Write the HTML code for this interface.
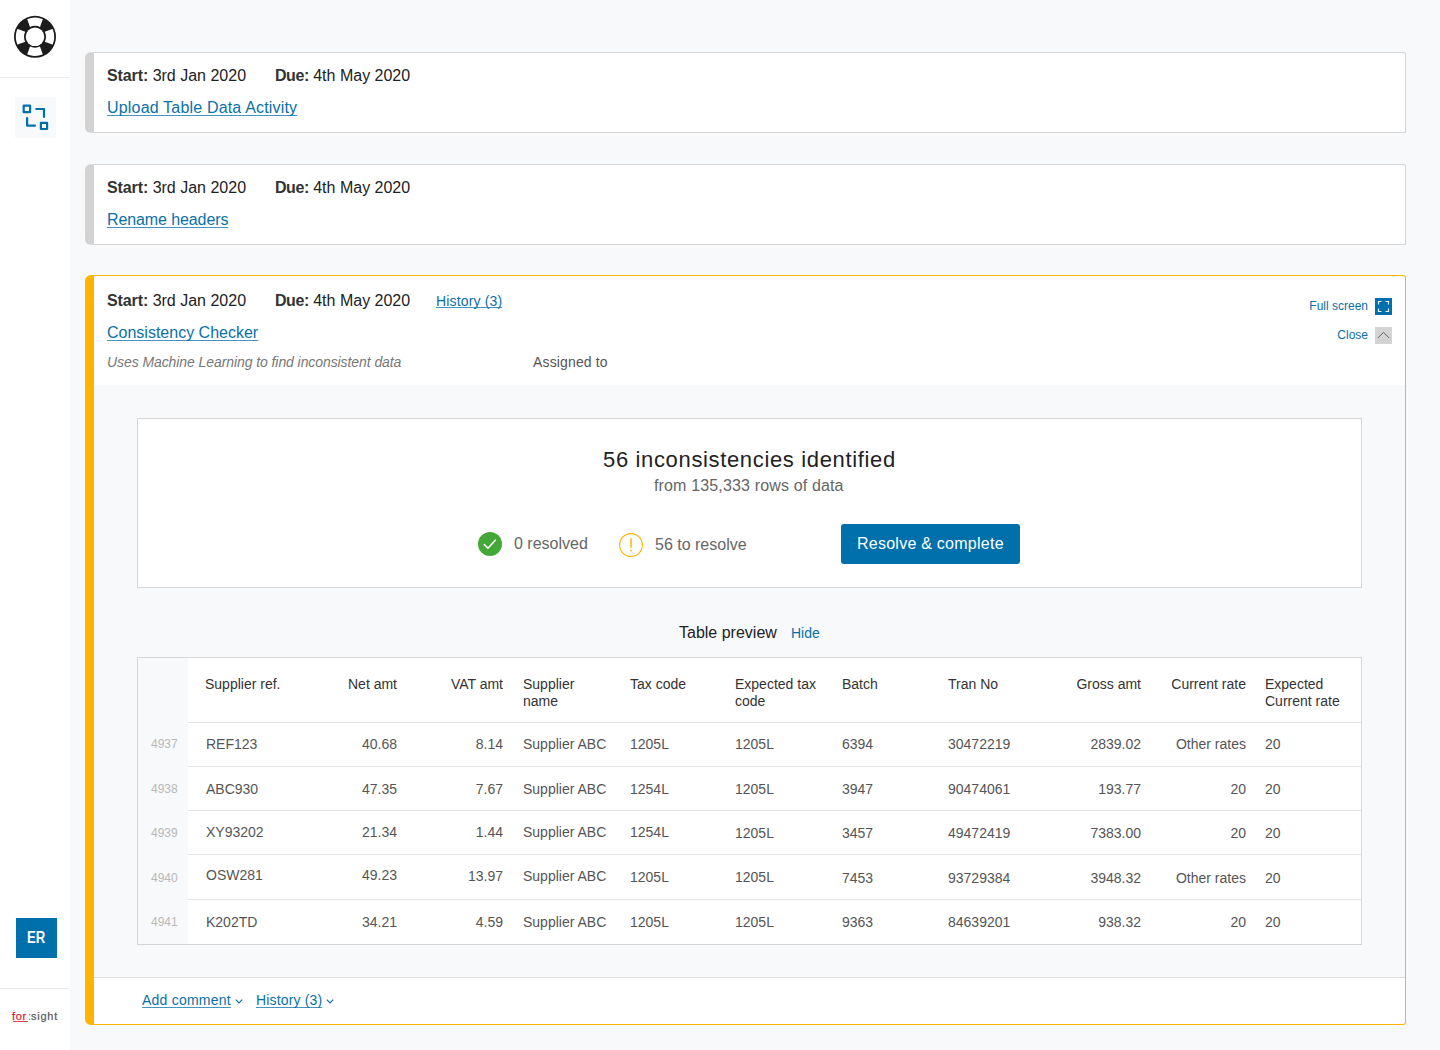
<!DOCTYPE html>
<html><head><meta charset="utf-8">
<style>
html,body{margin:0;padding:0;}
body{width:1440px;height:1050px;overflow:hidden;position:relative;background:#f8f9fb;font-family:"Liberation Sans", sans-serif;}
.t{position:absolute;white-space:nowrap;}
.a{position:absolute;}
u{text-decoration:underline;text-underline-offset:2px;text-decoration-thickness:1px;text-decoration-skip-ink:none;text-decoration-color:rgba(10,112,170,0.75);}
</style></head><body>
<div class="a" style="left:0;top:0;width:70px;height:1050px;background:#fff;"></div>
<svg class="a" style="left:0;top:0" width="70" height="77" viewBox="0 0 70 77">
<defs><clipPath id="ann"><path fill-rule="evenodd" clip-rule="evenodd" d="M35 17.6a19.2 19.2 0 1 0 0.001 0zM35 25.8a11 11 0 1 1 -0.001 0z"/></clipPath></defs>
<circle cx="35" cy="36.8" r="21" fill="#1c1c1c"/>
<g clip-path="url(#ann)" fill="#fff">
<path d="M33.57 36.8L25.74 15.3L44.26 15.3L36.43 36.8Z"/>
<path d="M33.57 36.8L25.74 58.3L44.26 58.3L36.43 36.8Z"/>
<path d="M35 35.37L13.5 27.54L13.5 46.06L35 38.23Z"/>
<path d="M35 35.37L56.5 27.54L56.5 46.06L35 38.23Z"/>
</g>
<circle cx="35" cy="36.8" r="9.3" fill="#fff"/>
</svg>
<div class="a" style="left:0;top:77px;width:70px;height:1px;background:#ececec;"></div>
<div class="a" style="left:15px;top:97px;width:41px;height:41px;background:#f8f9fb;"></div>
<svg class="a" style="left:0;top:90px" width="70" height="50" viewBox="0 90 70 50" fill="none" stroke="#0070ad" stroke-width="2.2" stroke-linecap="round" stroke-linejoin="round">
<rect x="23.7" y="105.6" width="6.4" height="6.6"/>
<path d="M36.3 109H44V117"/>
<path d="M27.1 118V125.6H35"/>
<rect x="40.9" y="122.8" width="6.2" height="6.2"/>
</svg>
<div class="a" style="left:16px;top:918px;width:41px;height:40px;background:#0070ad;"></div>
<div class="t" style="left:26.5px;top:930px;font-size:16px;line-height:16px;color:#fff;font-weight:bold;font-style:normal;transform:scaleX(0.82);transform-origin:0 0;">ER</div>
<div class="a" style="left:0;top:988px;width:70px;height:1px;background:#ececec;"></div>
<div class="t" style="left:12px;top:1011px;font-size:11px;line-height:11px;color:#e0192d;letter-spacing:0.7px;-webkit-text-stroke:0.25px #e0192d;">for</div>
<div class="t" style="left:28px;top:1011px;font-size:11px;line-height:11px;color:#777;">:</div>
<div class="t" style="left:31px;top:1011px;font-size:11px;line-height:11px;color:#555;letter-spacing:0.75px;-webkit-text-stroke:0.2px #555;">sight</div>
<div class="a" style="left:13px;top:1021px;width:15px;height:1px;background:#e0474f;"></div>
<div class="a" style="left:85px;top:52px;width:1311px;height:79px;background:#fff;border:1px solid #d6d6d6;border-left:9px solid #d3d3d3;border-radius:6px 3px 0 6px;"></div>
<div class="t" style="left:107px;top:68px;font-size:16px;line-height:16px;color:#222;"><b style="color:#333;letter-spacing:-0.1px">Start:</b> 3rd Jan 2020</div>
<div class="t" style="left:275px;top:68px;font-size:16px;line-height:16px;color:#222;"><b style="color:#333;letter-spacing:-0.45px">Due:</b> 4th May 2020</div>
<div class="t" style="left:107px;top:100px;font-size:16px;line-height:16px;color:#0a70aa;font-weight:normal;font-style:normal;letter-spacing:0.18px;"><u>Upload Table Data Activity</u></div>
<div class="a" style="left:85px;top:164px;width:1311px;height:79px;background:#fff;border:1px solid #d6d6d6;border-left:9px solid #d3d3d3;border-radius:6px 3px 0 6px;"></div>
<div class="t" style="left:107px;top:180px;font-size:16px;line-height:16px;color:#222;"><b style="color:#333;letter-spacing:-0.1px">Start:</b> 3rd Jan 2020</div>
<div class="t" style="left:275px;top:180px;font-size:16px;line-height:16px;color:#222;"><b style="color:#333;letter-spacing:-0.45px">Due:</b> 4th May 2020</div>
<div class="t" style="left:107px;top:212px;font-size:16px;line-height:16px;color:#0a70aa;font-weight:normal;font-style:normal;letter-spacing:-0.1px;"><u>Rename headers</u></div>
<div class="a" style="left:85px;top:275px;width:1311px;height:748px;background:#fff;border:1px solid #ffb400;border-left:9px solid #ffb400;border-radius:6px 3px 3px 6px;overflow:hidden;"></div>
<div class="t" style="left:107px;top:293px;font-size:16px;line-height:16px;color:#222;"><b style="color:#333;letter-spacing:-0.1px">Start:</b> 3rd Jan 2020</div>
<div class="t" style="left:275px;top:293px;font-size:16px;line-height:16px;color:#222;"><b style="color:#333;letter-spacing:-0.45px">Due:</b> 4th May 2020</div>
<div class="t" style="left:436px;top:294px;font-size:14px;line-height:14px;color:#0a70aa;font-weight:normal;font-style:normal;letter-spacing:0.15px;text-underline-offset:1px;"><u style="text-underline-offset:1px">History (3)</u></div>
<div class="t" style="left:107px;top:325px;font-size:16px;line-height:16px;color:#0a70aa;font-weight:normal;font-style:normal;"><u>Consistency Checker</u></div>
<div class="t" style="left:107px;top:355px;font-size:14px;line-height:14px;color:#777;font-weight:normal;font-style:italic;letter-spacing:-0.08px;">Uses Machine Learning to find inconsistent data</div>
<div class="t" style="left:533px;top:355px;font-size:14px;line-height:14px;color:#555;font-weight:normal;font-style:normal;letter-spacing:0.15px;">Assigned to</div>
<div class="t" style="right:72px;text-align:right;top:300px;font-size:12px;line-height:12px;color:#0a70aa;font-weight:normal;font-style:normal;">Full screen</div>
<div class="t" style="right:72px;text-align:right;top:329px;font-size:12px;line-height:12px;color:#0a70aa;font-weight:normal;font-style:normal;">Close</div>
<div class="a" style="left:1375px;top:298px;width:17px;height:17px;background:#0070ad;"></div>
<svg class="a" style="left:1375px;top:298px" width="17" height="17" viewBox="0 0 17 17" fill="none" stroke="#fff" stroke-width="1.2" opacity="0.9">
<path d="M3.5 6.5V3.5H6.5M10.5 3.5H13.5V6.5M13.5 10.5V13.5H10.5M6.5 13.5H3.5V10.5"/>
</svg>
<div class="a" style="left:1375px;top:327px;width:17px;height:17px;background:#d4d4d4;"></div>
<svg class="a" style="left:1375px;top:327px" width="17" height="17" viewBox="0 0 17 17" fill="none" stroke="#666" stroke-width="1">
<path d="M2.8 11L8.5 5.3L14.2 11"/>
</svg>
<div class="a" style="left:94px;top:385px;width:1311px;height:592px;background:#f8f9fb;"></div>
<div class="a" style="left:94px;top:977px;width:1311px;height:1px;background:#dcdcdc;"></div>
<div class="a" style="left:137px;top:418px;width:1223px;height:168px;background:#fff;border:1px solid #d6d6d6;"></div>
<div class="t" style="left:603px;top:449px;font-size:22px;line-height:22px;color:#222;font-weight:normal;font-style:normal;letter-spacing:0.65px;">56 inconsistencies identified</div>
<div class="t" style="left:654px;top:478px;font-size:16px;line-height:16px;color:#666;font-weight:normal;font-style:normal;letter-spacing:0.15px;">from 135,333 rows of data</div>
<svg class="a" style="left:478px;top:532px" width="24" height="24" viewBox="0 0 24 24">
<circle cx="12" cy="12" r="12" fill="#43a838"/>
<path d="M6.4 12.6L10 16.3L17.3 8.2" fill="none" stroke="#fff" stroke-width="1.55" stroke-linecap="round" stroke-linejoin="round"/>
</svg>
<svg class="a" style="left:619px;top:533px" width="24" height="24" viewBox="0 0 24 24">
<circle cx="12" cy="12" r="11.4" fill="none" stroke="#ffb400" stroke-width="1.15"/>
<path d="M12 5.8V14.2" stroke="#ffb400" stroke-width="1.5" stroke-linecap="round"/>
<circle cx="12" cy="17.7" r="0.9" fill="#ffb400"/>
</svg>
<div class="t" style="left:514px;top:536px;font-size:16px;line-height:16px;color:#666;font-weight:normal;font-style:normal;">0 resolved</div>
<div class="t" style="left:655px;top:537px;font-size:16px;line-height:16px;color:#666;font-weight:normal;font-style:normal;">56 to resolve</div>
<div class="a" style="left:841px;top:524px;width:179px;height:40px;background:#0070ad;border-radius:3px;"></div>
<div class="t" style="left:857px;top:536px;font-size:16px;line-height:16px;color:#fff;font-weight:normal;font-style:normal;letter-spacing:0.25px;">Resolve &amp; complete</div>
<div class="t" style="left:679px;top:625px;font-size:16px;line-height:16px;color:#222;font-weight:normal;font-style:normal;">Table preview</div>
<div class="t" style="left:791px;top:626px;font-size:14px;line-height:14px;color:#0a70aa;font-weight:normal;font-style:normal;">Hide</div>
<div class="a" style="left:137px;top:657px;width:1223px;height:286px;background:#fff;border:1px solid #d6d6d6;"></div>
<div class="a" style="left:138px;top:658px;width:50px;height:286px;background:#f8f9fb;"></div>
<div class="a" style="left:188px;top:722px;width:1173px;height:1px;background:#e3e4e8;"></div>
<div class="a" style="left:188px;top:766px;width:1173px;height:1px;background:#e3e4e8;"></div>
<div class="a" style="left:188px;top:810px;width:1173px;height:1px;background:#e3e4e8;"></div>
<div class="a" style="left:188px;top:854px;width:1173px;height:1px;background:#e3e4e8;"></div>
<div class="a" style="left:188px;top:899px;width:1173px;height:1px;background:#e3e4e8;"></div>
<div class="t" style="left:205px;top:677px;font-size:14px;line-height:14px;color:#333;font-weight:normal;font-style:normal;">Supplier ref.</div>
<div class="t" style="right:1043px;text-align:right;top:677px;font-size:14px;line-height:14px;color:#333;font-weight:normal;font-style:normal;">Net amt</div>
<div class="t" style="right:937px;text-align:right;top:677px;font-size:14px;line-height:14px;color:#333;font-weight:normal;font-style:normal;">VAT amt</div>
<div class="t" style="left:523px;top:677px;font-size:14px;line-height:14px;color:#333;font-weight:normal;font-style:normal;">Supplier</div>
<div class="t" style="left:523px;top:694px;font-size:14px;line-height:14px;color:#333;font-weight:normal;font-style:normal;">name</div>
<div class="t" style="left:630px;top:677px;font-size:14px;line-height:14px;color:#333;font-weight:normal;font-style:normal;">Tax code</div>
<div class="t" style="left:735px;top:677px;font-size:14px;line-height:14px;color:#333;font-weight:normal;font-style:normal;">Expected tax</div>
<div class="t" style="left:735px;top:694px;font-size:14px;line-height:14px;color:#333;font-weight:normal;font-style:normal;">code</div>
<div class="t" style="left:842px;top:677px;font-size:14px;line-height:14px;color:#333;font-weight:normal;font-style:normal;">Batch</div>
<div class="t" style="left:948px;top:677px;font-size:14px;line-height:14px;color:#333;font-weight:normal;font-style:normal;">Tran No</div>
<div class="t" style="right:299px;text-align:right;top:677px;font-size:14px;line-height:14px;color:#333;font-weight:normal;font-style:normal;">Gross amt</div>
<div class="t" style="right:194px;text-align:right;top:677px;font-size:14px;line-height:14px;color:#333;font-weight:normal;font-style:normal;">Current rate</div>
<div class="t" style="left:1265px;top:677px;font-size:14px;line-height:14px;color:#333;font-weight:normal;font-style:normal;">Expected</div>
<div class="t" style="left:1265px;top:694px;font-size:14px;line-height:14px;color:#333;font-weight:normal;font-style:normal;">Current rate</div>
<div class="t" style="left:151px;top:738px;font-size:12px;line-height:12px;color:#b8b8b8;font-weight:normal;font-style:normal;">4937</div>
<div class="t" style="left:206px;top:737px;font-size:14px;line-height:14px;color:#555;font-weight:normal;font-style:normal;">REF123</div>
<div class="t" style="right:1043px;text-align:right;top:737px;font-size:14px;line-height:14px;color:#555;font-weight:normal;font-style:normal;">40.68</div>
<div class="t" style="right:937px;text-align:right;top:737px;font-size:14px;line-height:14px;color:#555;font-weight:normal;font-style:normal;">8.14</div>
<div class="t" style="left:523px;top:737px;font-size:14px;line-height:14px;color:#555;font-weight:normal;font-style:normal;">Supplier ABC</div>
<div class="t" style="left:630px;top:737px;font-size:14px;line-height:14px;color:#555;font-weight:normal;font-style:normal;">1205L</div>
<div class="t" style="left:735px;top:737px;font-size:14px;line-height:14px;color:#555;font-weight:normal;font-style:normal;">1205L</div>
<div class="t" style="left:842px;top:737px;font-size:14px;line-height:14px;color:#555;font-weight:normal;font-style:normal;">6394</div>
<div class="t" style="left:948px;top:737px;font-size:14px;line-height:14px;color:#555;font-weight:normal;font-style:normal;">30472219</div>
<div class="t" style="right:299px;text-align:right;top:737px;font-size:14px;line-height:14px;color:#555;font-weight:normal;font-style:normal;">2839.02</div>
<div class="t" style="right:194px;text-align:right;top:737px;font-size:14px;line-height:14px;color:#555;font-weight:normal;font-style:normal;">Other rates</div>
<div class="t" style="left:1265px;top:737px;font-size:14px;line-height:14px;color:#555;font-weight:normal;font-style:normal;">20</div>
<div class="t" style="left:151px;top:783px;font-size:12px;line-height:12px;color:#b8b8b8;font-weight:normal;font-style:normal;">4938</div>
<div class="t" style="left:206px;top:782px;font-size:14px;line-height:14px;color:#555;font-weight:normal;font-style:normal;">ABC930</div>
<div class="t" style="right:1043px;text-align:right;top:782px;font-size:14px;line-height:14px;color:#555;font-weight:normal;font-style:normal;">47.35</div>
<div class="t" style="right:937px;text-align:right;top:782px;font-size:14px;line-height:14px;color:#555;font-weight:normal;font-style:normal;">7.67</div>
<div class="t" style="left:523px;top:782px;font-size:14px;line-height:14px;color:#555;font-weight:normal;font-style:normal;">Supplier ABC</div>
<div class="t" style="left:630px;top:782px;font-size:14px;line-height:14px;color:#555;font-weight:normal;font-style:normal;">1254L</div>
<div class="t" style="left:735px;top:782px;font-size:14px;line-height:14px;color:#555;font-weight:normal;font-style:normal;">1205L</div>
<div class="t" style="left:842px;top:782px;font-size:14px;line-height:14px;color:#555;font-weight:normal;font-style:normal;">3947</div>
<div class="t" style="left:948px;top:782px;font-size:14px;line-height:14px;color:#555;font-weight:normal;font-style:normal;">90474061</div>
<div class="t" style="right:299px;text-align:right;top:782px;font-size:14px;line-height:14px;color:#555;font-weight:normal;font-style:normal;">193.77</div>
<div class="t" style="right:194px;text-align:right;top:782px;font-size:14px;line-height:14px;color:#555;font-weight:normal;font-style:normal;">20</div>
<div class="t" style="left:1265px;top:782px;font-size:14px;line-height:14px;color:#555;font-weight:normal;font-style:normal;">20</div>
<div class="t" style="left:151px;top:827px;font-size:12px;line-height:12px;color:#b8b8b8;font-weight:normal;font-style:normal;">4939</div>
<div class="t" style="left:206px;top:825px;font-size:14px;line-height:14px;color:#555;font-weight:normal;font-style:normal;">XY93202</div>
<div class="t" style="right:1043px;text-align:right;top:825px;font-size:14px;line-height:14px;color:#555;font-weight:normal;font-style:normal;">21.34</div>
<div class="t" style="right:937px;text-align:right;top:825px;font-size:14px;line-height:14px;color:#555;font-weight:normal;font-style:normal;">1.44</div>
<div class="t" style="left:523px;top:825px;font-size:14px;line-height:14px;color:#555;font-weight:normal;font-style:normal;">Supplier ABC</div>
<div class="t" style="left:630px;top:825px;font-size:14px;line-height:14px;color:#555;font-weight:normal;font-style:normal;">1254L</div>
<div class="t" style="left:735px;top:826px;font-size:14px;line-height:14px;color:#555;font-weight:normal;font-style:normal;">1205L</div>
<div class="t" style="left:842px;top:826px;font-size:14px;line-height:14px;color:#555;font-weight:normal;font-style:normal;">3457</div>
<div class="t" style="left:948px;top:826px;font-size:14px;line-height:14px;color:#555;font-weight:normal;font-style:normal;">49472419</div>
<div class="t" style="right:299px;text-align:right;top:826px;font-size:14px;line-height:14px;color:#555;font-weight:normal;font-style:normal;">7383.00</div>
<div class="t" style="right:194px;text-align:right;top:826px;font-size:14px;line-height:14px;color:#555;font-weight:normal;font-style:normal;">20</div>
<div class="t" style="left:1265px;top:826px;font-size:14px;line-height:14px;color:#555;font-weight:normal;font-style:normal;">20</div>
<div class="t" style="left:151px;top:872px;font-size:12px;line-height:12px;color:#b8b8b8;font-weight:normal;font-style:normal;">4940</div>
<div class="t" style="left:206px;top:868px;font-size:14px;line-height:14px;color:#555;font-weight:normal;font-style:normal;">OSW281</div>
<div class="t" style="right:1043px;text-align:right;top:868px;font-size:14px;line-height:14px;color:#555;font-weight:normal;font-style:normal;">49.23</div>
<div class="t" style="right:937px;text-align:right;top:869px;font-size:14px;line-height:14px;color:#555;font-weight:normal;font-style:normal;">13.97</div>
<div class="t" style="left:523px;top:869px;font-size:14px;line-height:14px;color:#555;font-weight:normal;font-style:normal;">Supplier ABC</div>
<div class="t" style="left:630px;top:870px;font-size:14px;line-height:14px;color:#555;font-weight:normal;font-style:normal;">1205L</div>
<div class="t" style="left:735px;top:870px;font-size:14px;line-height:14px;color:#555;font-weight:normal;font-style:normal;">1205L</div>
<div class="t" style="left:842px;top:871px;font-size:14px;line-height:14px;color:#555;font-weight:normal;font-style:normal;">7453</div>
<div class="t" style="left:948px;top:871px;font-size:14px;line-height:14px;color:#555;font-weight:normal;font-style:normal;">93729384</div>
<div class="t" style="right:299px;text-align:right;top:871px;font-size:14px;line-height:14px;color:#555;font-weight:normal;font-style:normal;">3948.32</div>
<div class="t" style="right:194px;text-align:right;top:871px;font-size:14px;line-height:14px;color:#555;font-weight:normal;font-style:normal;">Other rates</div>
<div class="t" style="left:1265px;top:871px;font-size:14px;line-height:14px;color:#555;font-weight:normal;font-style:normal;">20</div>
<div class="t" style="left:151px;top:916px;font-size:12px;line-height:12px;color:#b8b8b8;font-weight:normal;font-style:normal;">4941</div>
<div class="t" style="left:206px;top:915px;font-size:14px;line-height:14px;color:#555;font-weight:normal;font-style:normal;">K202TD</div>
<div class="t" style="right:1043px;text-align:right;top:915px;font-size:14px;line-height:14px;color:#555;font-weight:normal;font-style:normal;">34.21</div>
<div class="t" style="right:937px;text-align:right;top:915px;font-size:14px;line-height:14px;color:#555;font-weight:normal;font-style:normal;">4.59</div>
<div class="t" style="left:523px;top:915px;font-size:14px;line-height:14px;color:#555;font-weight:normal;font-style:normal;">Supplier ABC</div>
<div class="t" style="left:630px;top:915px;font-size:14px;line-height:14px;color:#555;font-weight:normal;font-style:normal;">1205L</div>
<div class="t" style="left:735px;top:915px;font-size:14px;line-height:14px;color:#555;font-weight:normal;font-style:normal;">1205L</div>
<div class="t" style="left:842px;top:915px;font-size:14px;line-height:14px;color:#555;font-weight:normal;font-style:normal;">9363</div>
<div class="t" style="left:948px;top:915px;font-size:14px;line-height:14px;color:#555;font-weight:normal;font-style:normal;">84639201</div>
<div class="t" style="right:299px;text-align:right;top:915px;font-size:14px;line-height:14px;color:#555;font-weight:normal;font-style:normal;">938.32</div>
<div class="t" style="right:194px;text-align:right;top:915px;font-size:14px;line-height:14px;color:#555;font-weight:normal;font-style:normal;">20</div>
<div class="t" style="left:1265px;top:915px;font-size:14px;line-height:14px;color:#555;font-weight:normal;font-style:normal;">20</div>
<div class="t" style="left:142px;top:993px;font-size:14px;line-height:14px;color:#0a70aa;font-weight:normal;font-style:normal;letter-spacing:0.22px;"><u>Add comment</u></div>
<div class="t" style="left:256px;top:993px;font-size:14px;line-height:14px;color:#0a70aa;font-weight:normal;font-style:normal;letter-spacing:0.15px;"><u>History (3)</u></div>
<svg class="a" style="left:234px;top:997px" width="10" height="8" viewBox="0 0 10 8" fill="none" stroke="#0a70aa" stroke-width="1.2"><path d="M1.8 2.6L5 5.8L8.2 2.6"/></svg>
<svg class="a" style="left:325px;top:997px" width="10" height="8" viewBox="0 0 10 8" fill="none" stroke="#0a70aa" stroke-width="1.2"><path d="M1.8 2.6L5 5.8L8.2 2.6"/></svg>
</body></html>
